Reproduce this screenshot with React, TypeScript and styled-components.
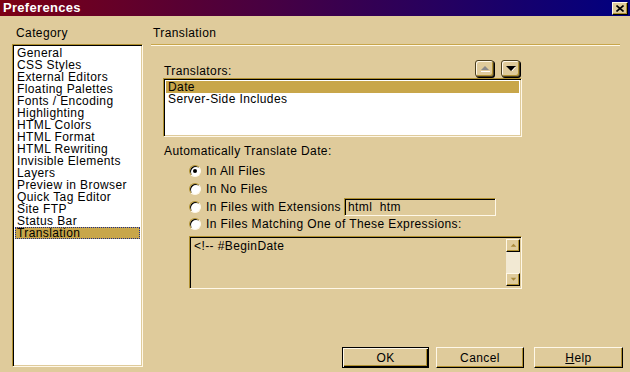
import React from 'react';
import styled, {createGlobalStyle, css} from 'styled-components';

const face = '#DFCB9B';
const gold = '#C8A64A';
const shade = '#B0902F';
const light = '#FFF8E8';

const GlobalStyle = createGlobalStyle`
    * { box-sizing: border-box; }
    body {
        margin: 0;
        background: ${face};
        font-family: "Liberation Sans", Arial, sans-serif;
        font-size: 12px;
        letter-spacing: 0.4px;
        color: #000;
    }
`

const sunken = css`
    border-style: solid;
    border-width: 1px;
    border-color: ${shade} ${light} ${light} ${shade};
    box-shadow: inset 1px 1px 0 #000, inset -1px -1px 0 ${face};
`

const raised = css`
    border-style: solid;
    border-width: 1px;
    border-color: ${light} #000 #000 ${light};
    box-shadow: inset -1px -1px 0 ${shade};
    background: ${face};
`

const Window = styled.div`
    width: 630px;
    height: 372px;
    display: flex;
    flex-direction: column;
    overflow: hidden;
`

const TitleBar = styled.div`
    height: 16px;
    display: flex;
    align-items: center;
    justify-content: space-between;
    padding: 0 2px 0 3px;
    background: linear-gradient(to right, #7C0014, #000080);
`

const Title = styled.span`
    color: #fff;
    font-weight: 700;
    font-size: 13px;
    letter-spacing: 0.3px;
    line-height: 16px;
`

const CloseButton = styled.div`
    ${raised};
    width: 16px;
    height: 13px;
    display: flex;
    align-items: center;
    justify-content: center;
`

const Body = styled.div`
    flex: 1;
    display: grid;
    grid-template-columns: 143px 1fr;
    min-height: 0;
`

const CategoryPane = styled.div`
    padding: 11px 0 0 12px;
    display: flex;
    flex-direction: column;
`

const PaneLabel = styled.div`
    line-height: 12px;
    padding-left: 4px;
    margin-bottom: 5px;
`

const ListBox = styled.div<{ $height: number }>`
    ${sunken};
    background: #fff;
    width: 100%;
    height: ${p => p.$height}px;
    padding: 2px;
`

const ListItem = styled.div<{ $selected?: boolean; $focused?: boolean }>`
    height: 12px;
    line-height: 12px;
    padding-left: 2px;
    white-space: nowrap;
    background: ${p => (p.$selected ? gold : 'transparent')};
    ${p => p.$focused && css`
        outline: 1px dotted #1E2E8C;
        outline-offset: -1px;
    `}
`

const SettingsPane = styled.div`
    padding: 11px 7px 4px 8px;
    display: flex;
    flex-direction: column;
`

const SectionHeader = styled.div`
    line-height: 12px;
    padding: 0 0 5px 2px;
    margin-right: 3px;
    border-bottom: 1px solid ${gold};
    box-shadow: 0 1px 0 ${light};
`

const Content = styled.div`
    margin: 15px 0 0 12px;
    width: 359px;
    display: flex;
    flex-direction: column;
`

const TranslatorsHeader = styled.div`
    height: 18px;
    display: flex;
    align-items: flex-start;
    justify-content: space-between;
    padding-right: 2px;
`

const FieldLabel = styled.div<{ $top?: number }>`
    line-height: 12px;
    padding-left: 1px;
    margin-top: ${p => p.$top ?? 0}px;
`

const ArrowButtons = styled.div`
    display: flex;
    gap: 7px;
`

const ArrowButton = styled.div`
    width: 19px;
    height: 17px;
    border: 1px solid #4A3E1E;
    border-radius: 3px;
    background: ${face};
    box-shadow: 1px 1px 0 #000, inset 1px 1px 0 ${light}, inset -1px -1px 0 ${shade};
    display: flex;
    align-items: center;
    justify-content: center;
`

const RadioGroup = styled.div`
    margin: 5px 0 0 26px;
    display: flex;
    flex-direction: column;
`

const RadioRow = styled.div`
    height: 18px;
    display: flex;
    align-items: center;
    white-space: nowrap;

    &:last-child {
        height: 16px;
    }
`

const RadioCircle = styled.span<{ $checked?: boolean }>`
    width: 12px;
    height: 12px;
    border-radius: 50%;
    border: 1px solid;
    border-color: ${shade} ${light} ${light} ${shade};
    box-shadow: inset 1px 1px 0 #000;
    background: #fff;
    margin-right: 5px;
    display: flex;
    align-items: center;
    justify-content: center;

    &::after {
        content: '';
        width: 4px;
        height: 4px;
        border-radius: 50%;
        background: ${p => (p.$checked ? '#000' : 'transparent')};
    }
`

const TextField = styled.div`
    ${sunken};
    width: 152px;
    height: 18px;
    margin-left: 3px;
    padding: 1px 0 0 3px;
    line-height: 14px;
`

const ExpressionBox = styled.div`
    ${sunken};
    margin: 4px 0 0 26px;
    width: 333px;
    height: 53px;
    display: flex;
    padding: 2px 1px 2px 2px;
`

const ExpressionText = styled.div`
    flex: 1;
    padding: 1px 0 0 2px;
    line-height: 12px;
`

const ScrollBar = styled.div`
    width: 14px;
    display: flex;
    flex-direction: column;
    justify-content: space-between;
    background: #F2E9D3;
`

const ScrollButton = styled.div`
    ${raised};
    height: 13px;
    display: flex;
    align-items: center;
    justify-content: center;
`

const ButtonRow = styled.div`
    margin-top: auto;
    display: flex;
    justify-content: flex-end;
`

const DialogButton = styled.div<{ $width: number; $gap?: number; $default?: boolean }>`
    width: ${p => p.$width}px;
    height: 21px;
    margin-left: ${p => p.$gap ?? 0}px;
    display: flex;
    align-items: center;
    justify-content: center;
    background: ${face};
    ${p => (p.$default
        ? css`
            border: 1px solid #000;
            box-shadow: inset 1px 1px 0 ${light}, inset -1px -1px 0 #000, inset -2px -2px 0 ${shade};
        `
        : raised)};
`

const categories = [
    'General', 'CSS Styles', 'External Editors', 'Floating Palettes', 'Fonts / Encoding',
    'Highlighting', 'HTML Colors', 'HTML Format', 'HTML Rewriting', 'Invisible Elements',
    'Layers', 'Preview in Browser', 'Quick Tag Editor', 'Site FTP', 'Status Bar', 'Translation',
];

const Triangle = ({up, color, size = 9}: { up?: boolean; color: string; size?: number }) => (
    <svg width={size} height={size / 2 + 1} viewBox="0 0 10 6">
        {up
            ? <polygon points="1,5 5,1 9,5" fill={color}/>
            : <polygon points="1,1 9,1 5,5" fill={color}/>}
    </svg>
);

export default function App() {
    return (
        <Window>
            <GlobalStyle/>
            <TitleBar>
                <Title>Preferences</Title>
                <CloseButton>
                    <svg width="8" height="7" viewBox="0 0 8 7">
                        <path d="M0.5 0.5 L7.5 6.5 M7.5 0.5 L0.5 6.5" stroke="#000" strokeWidth="1.6"/>
                    </svg>
                </CloseButton>
            </TitleBar>
            <Body>
                <CategoryPane>
                    <PaneLabel>Category</PaneLabel>
                    <ListBox $height={323}>
                        {categories.map(c => (
                            <ListItem key={c} $selected={c === 'Translation'} $focused={c === 'Translation'}>
                                {c}
                            </ListItem>
                        ))}
                    </ListBox>
                </CategoryPane>
                <SettingsPane>
                    <SectionHeader>Translation</SectionHeader>
                    <Content>
                        <TranslatorsHeader>
                            <FieldLabel $top={5}>Translators:</FieldLabel>
                            <ArrowButtons>
                                <ArrowButton>
                                    <svg width="10" height="6" viewBox="0 0 10 6">
                                        <polygon points="1,4 5,0 9,4" fill="#8A8A8A"/>
                                        <line x1="1" y1="5.5" x2="10" y2="5.5" stroke="#fff"/>
                                    </svg>
                                </ArrowButton>
                                <ArrowButton>
                                    <svg width="10" height="6" viewBox="0 0 10 6">
                                        <polygon points="0,0 10,0 5,5" fill="#000"/>
                                        <line x1="9.5" y1="1" x2="6" y2="5" stroke="#fff"/>
                                    </svg>
                                </ArrowButton>
                            </ArrowButtons>
                        </TranslatorsHeader>
                        <ListBox $height={59}>
                            <ListItem $selected>Date</ListItem>
                            <ListItem>Server-Side Includes</ListItem>
                        </ListBox>
                        <FieldLabel $top={8}>Automatically Translate Date:</FieldLabel>
                        <RadioGroup>
                            <RadioRow><RadioCircle $checked/>In All Files</RadioRow>
                            <RadioRow><RadioCircle/>In No Files</RadioRow>
                            <RadioRow>
                                <RadioCircle/>In Files with Extensions
                                <TextField>html&nbsp;&nbsp;htm</TextField>
                            </RadioRow>
                            <RadioRow><RadioCircle/>In Files Matching One of These Expressions:</RadioRow>
                        </RadioGroup>
                        <ExpressionBox>
                            <ExpressionText>&lt;!-- #BeginDate</ExpressionText>
                            <ScrollBar>
                                <ScrollButton><Triangle up color="#A8893A" size={7}/></ScrollButton>
                                <ScrollButton><Triangle color="#A8893A" size={7}/></ScrollButton>
                            </ScrollBar>
                        </ExpressionBox>
                    </Content>
                    <ButtonRow>
                        <DialogButton $width={87} $default>OK</DialogButton>
                        <DialogButton $width={88} $gap={7}>Cancel</DialogButton>
                        <DialogButton $width={89} $gap={10}><u>H</u>elp</DialogButton>
                    </ButtonRow>
                </SettingsPane>
            </Body>
        </Window>
    );
}
